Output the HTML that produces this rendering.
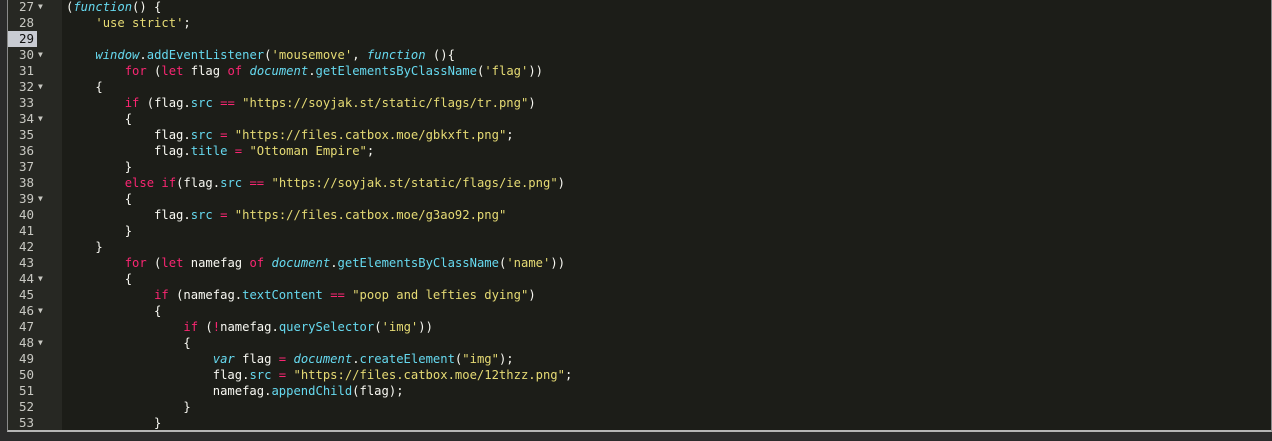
<!DOCTYPE html><html><head><style>
body{margin:0;width:1272px;height:441px;background:#2b2b2b;overflow:hidden;position:relative;font-family:"DejaVu Sans Mono","Liberation Mono",monospace;font-size:12.2px}
#ed{position:absolute;left:7px;top:0;width:1263px;height:430px;border-left:1px solid #8a8a8a;border-right:1px solid #8a8a8a;border-bottom:2px solid #b5b5b5;background:#1c1d18;overflow:hidden}
#g{position:absolute;left:0;top:0;width:54px;height:100%;background:#272823}
.l{position:absolute;left:0;height:16px;line-height:16px;white-space:pre;color:#f8f8f2}
.n{position:absolute;left:0;width:26px;text-align:right;color:#c8c8c2;height:16px;line-height:16px;font-size:12.5px}
.hl{background:#c8cbd2;color:#111;width:29px;padding-right:0;text-align:left;text-indent:11px}
.f{position:absolute;left:30px;font-size:8px;color:#c8c8c2;height:16px;line-height:16px}
.k{color:#f92672}.s{color:#e6db74}.c{color:#66d9ef}.i{color:#66d9ef;font-style:italic}
</style></head><body><div id="ed"><div id="g"></div><div id="lines"></div></div>
<script>
var L=[
'(<span class="i">function</span>() {',
'    <span class="s">\'use strict\'</span>;',
'',
'    <span class="i">window</span>.<span class="c">addEventListener</span>(<span class="s">\'mousemove\'</span>, <span class="i">function</span> (){',
'        <span class="k">for</span> (<span class="k">let</span> flag <span class="k">of</span> <span class="i">document</span>.<span class="c">getElementsByClassName</span>(<span class="s">\'flag\'</span>))',
'    {',
'        <span class="k">if</span> (flag.<span class="c">src</span> <span class="k">==</span> <span class="s">"https://soyjak.st/static/flags/tr.png"</span>)',
'        {',
'            flag.<span class="c">src</span> <span class="k">=</span> <span class="s">"https://files.catbox.moe/gbkxft.png"</span>;',
'            flag.<span class="c">title</span> <span class="k">=</span> <span class="s">"Ottoman Empire"</span>;',
'        }',
'        <span class="k">else if</span>(flag.<span class="c">src</span> <span class="k">==</span> <span class="s">"https://soyjak.st/static/flags/ie.png"</span>)',
'        {',
'            flag.<span class="c">src</span> <span class="k">=</span> <span class="s">"https://files.catbox.moe/g3ao92.png"</span>',
'        }',
'    }',
'        <span class="k">for</span> (<span class="k">let</span> namefag <span class="k">of</span> <span class="i">document</span>.<span class="c">getElementsByClassName</span>(<span class="s">\'name\'</span>))',
'        {',
'            <span class="k">if</span> (namefag.<span class="c">textContent</span> <span class="k">==</span> <span class="s">"poop and lefties dying"</span>)',
'            {',
'                <span class="k">if</span> (<span class="k">!</span>namefag.<span class="c">querySelector</span>(<span class="s">\'img\'</span>))',
'                {',
'                    <span class="i">var</span> flag <span class="k">=</span> <span class="i">document</span>.<span class="c">createElement</span>(<span class="s">"img"</span>);',
'                    flag.<span class="c">src</span> <span class="k">=</span> <span class="s">"https://files.catbox.moe/12thzz.png"</span>;',
'                    namefag.<span class="c">appendChild</span>(flag);',
'                }',
'            }'];
var folds=[27,30,32,34,39,44,46,48];
var h='';
for(var j=0;j<L.length;j++){var n=27+j,t=-1+16*j;
h+='<div class="n'+(n==29?' hl':'')+'" style="top:'+t+'px">'+n+'</div>';
if(folds.indexOf(n)>=0)h+='<div class="f" style="top:'+t+'px">&#9660;</div>';
h+='<div class="l" style="left:58px;top:'+t+'px">'+L[j]+'</div>';}
document.getElementById('lines').innerHTML=h;
</script></body></html>
